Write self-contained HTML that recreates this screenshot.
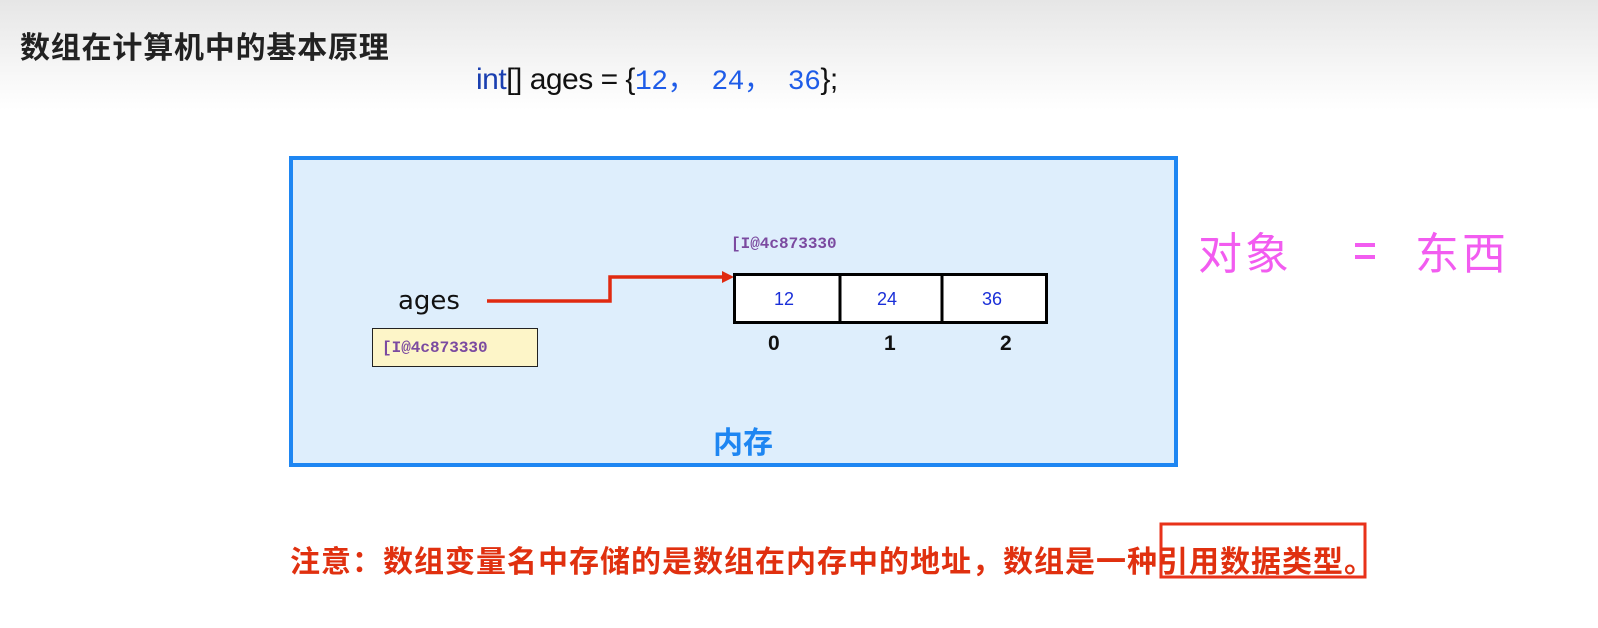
<!DOCTYPE html>
<html><head><meta charset="utf-8"><style>
body{margin:0;width:1598px;height:628px;overflow:hidden;background:linear-gradient(#e6e6e6 0,#f4f4f4 60px,#fff 110px,#fff);position:relative;font-family:"Liberation Sans","Noto Sans CJK SC",sans-serif}
.a{position:absolute;white-space:nowrap}
.mono{font-family:"Liberation Mono","DejaVu Sans Mono",monospace;font-weight:bold;color:#7b4aa0}
.p{position:absolute;font-size:44px;color:#f25cf0;top:218px}
.bar{position:absolute;left:1355px;width:20px;height:4px;background:#f25cf0}
</style></head><body>
<div class="a" style="left:20px;top:23px;font-size:30px;font-weight:bold;color:#222;letter-spacing:0.8px">数组在计算机中的基本原理</div>
<div class="a" style="left:476px;top:58px;font-size:30px;color:#111;letter-spacing:-0.5px"><span style="color:#1a3fb0">int</span>[] ages = {<span style="color:#1e5ce8;font-family:'Liberation Mono','Noto Sans CJK SC',monospace;font-size:28px">12，&nbsp;24，&nbsp;36</span>};</div>
<div class="a" style="left:289px;top:156px;width:881px;height:303px;border:4px solid #1e86f2;background:#deeefc"></div>
<div class="a mono" style="left:731px;top:235px;font-size:16px">[I@4c873330</div>
<div class="a" style="left:398px;top:286px;font-size:26px;color:#111;font-family:'DejaVu Sans',sans-serif">ages</div>
<div class="a" style="left:372px;top:328px;width:164px;height:37px;border:1.5px solid #222;background:#fdf5c8"></div>
<div class="a mono" style="left:382px;top:339px;font-size:16px">[I@4c873330</div>
<svg class="a" style="left:0;top:0" width="1598" height="628">
<polyline points="487,301 610,301 610,277 724,277" fill="none" stroke="#e02a10" stroke-width="3.5"/>
<polygon points="734,277 722,271 722,283" fill="#e02a10"/>
<rect x="734.5" y="274.5" width="312" height="48" fill="#fff" stroke="#000" stroke-width="3"/>
<line x1="840" y1="274" x2="840" y2="323" stroke="#000" stroke-width="3"/>
<line x1="942" y1="274" x2="942" y2="323" stroke="#000" stroke-width="3"/>
<rect x="1161" y="524" width="204" height="53" fill="none" stroke="#e8321a" stroke-width="3"/>
</svg>
<div class="a" style="left:774px;top:289px;font-size:18px;color:#1a2fd8">12</div>
<div class="a" style="left:877px;top:289px;font-size:18px;color:#1a2fd8">24</div>
<div class="a" style="left:982px;top:289px;font-size:18px;color:#1a2fd8">36</div>
<div class="a" style="left:768px;top:332px;font-size:21px;font-weight:bold;color:#111">0</div>
<div class="a" style="left:884px;top:332px;font-size:21px;font-weight:bold;color:#111">1</div>
<div class="a" style="left:1000px;top:332px;font-size:21px;font-weight:bold;color:#111">2</div>
<div class="a" style="left:713px;top:418px;font-size:30px;font-weight:bold;color:#1e86f2">内存</div>
<div class="p" style="left:1198px">对</div>
<div class="p" style="left:1245px">象</div>
<div class="bar" style="top:243px"></div>
<div class="bar" style="top:255px"></div>
<div class="p" style="left:1415px">东</div>
<div class="p" style="left:1462px">西</div>
<div class="a" style="left:290px;top:537px;font-size:30px;font-weight:bold;color:#e0300f;letter-spacing:1px">注意：数组变量名中存储的是数组在内存中的地址，数组是一种引用数据类型。</div>
</body></html>
